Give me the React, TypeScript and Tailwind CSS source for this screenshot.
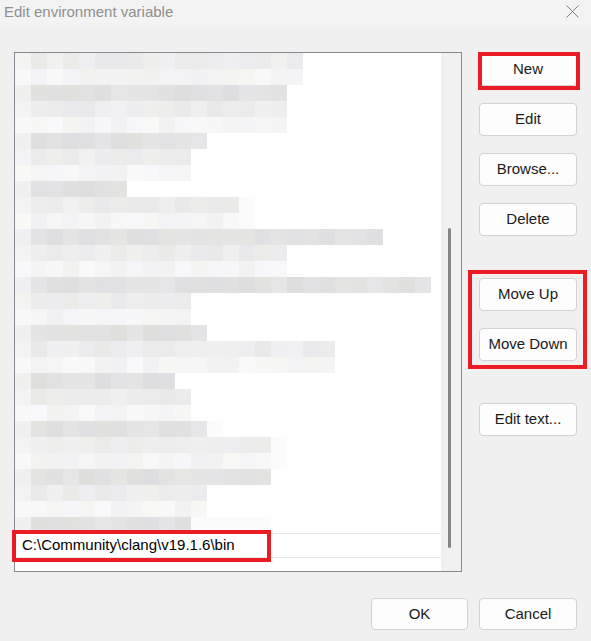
import React from "react"

// blurred list entries: [blocks, tone, faint tail blocks]
const rows: [number, "d" | "m" | "l", number][] = [
  [18, "m", 0], [18, "l", 0], [17, "d", 0], [17, "m", 0], [17, "l", 0],
  [12, "d", 0], [11, "m", 0], [11, "l", 0], [7, "d", 0], [14, "m", 1],
  [14, "l", 1], [23, "d", 0], [17, "m", 0], [17, "l", 0], [26, "d", 0],
  [11, "m", 0], [11, "l", 0], [12, "d", 0], [20, "m", 0], [20, "l", 0],
  [10, "d", 0], [11, "m", 0], [11, "l", 0], [12, "d", 1], [16, "m", 1],
  [16, "l", 1], [16, "d", 0], [12, "m", 0], [12, "l", 0], [11, "d", 5],
]

const base = { d: 226, m: 237, l: 245 }
const first = { d: 240, m: 243, l: 248 }

const shade = (r: number, c: number, tone: "d" | "m" | "l") => {
  const h = Math.abs(Math.sin(r * 12.9898 + c * 78.233) * 43758.5453) % 1
  const v = c === 0 ? first[tone] : base[tone] + Math.round((h - 0.5) * 8)
  const t = Math.abs(Math.sin(r * 3.1 + c * 7.7) * 1000) % 1
  const b = t > 0.7 ? 2 : t < 0.2 ? -1 : 0
  return `rgb(${v},${v},${Math.min(255, v + b)})`
}

const Button = ({ label }: { label: string }) => (
  <div className="h-[33px] w-[98px] flex items-center justify-center rounded-[4px] border border-[#d2d2d2] bg-[#fdfdfd] text-[15px] text-[#1a1a1a]">
    {label}
  </div>
)

const App = () => {
  return (
    <div className="w-[591px] h-[641px] bg-[#f0f0f0] flex flex-col font-['Liberation_Sans',Arial,sans-serif] overflow-hidden">
      <div className="h-[27px] bg-[#f3f3f3] flex items-center justify-between pl-[4px] pr-[12px]">
        <span className="text-[15px] text-[#8f8f8f] leading-none -mt-[4px]">Edit environment variable</span>
        <svg width="13" height="13" viewBox="0 0 13 13" className="-mt-[4px]">
          <path d="M0.5 0.5 L12.5 12.5 M12.5 0.5 L0.5 12.5" stroke="#808080" strokeWidth="1" />
        </svg>
      </div>

      <div className="flex pl-[14px] pt-[25px]">
        <div className="w-[448px] h-[520px] border border-[#868b93] bg-white flex">
          <div className="flex-1 flex flex-col">
            {rows.map(([n, tone, faint], r) => (
              <div key={r} className="flex h-[16px]">
                {Array.from({ length: n }).map((_, c) => (
                  <div key={c} className="w-[16px] h-[16px]" style={{ backgroundColor: shade(r, c, tone) }} />
                ))}
                {Array.from({ length: faint }).map((_, c) => (
                  <div key={"f" + c} className="w-[16px] h-[16px] bg-[#fbfbfb]" />
                ))}
              </div>
            ))}
            <div className="h-px bg-[#e8e8e8]" />
            <div className="relative h-[23px] flex items-center pl-[7px] text-[15px] text-black">
              <span>C:\Community\clang\v19.1.6\bin</span>
              <div className="absolute -left-[3px] -top-[4px] w-[259px] h-[32px] border-4 border-[#ec1c24]" />
            </div>
            <div className="h-px bg-[#e8e8e8]" />
          </div>
          <div className="w-[20px] bg-[#f1f1f1] pl-[7px] pt-[175px]">
            <div className="w-[3px] h-[320px] bg-[#858585] rounded-full" />
          </div>
        </div>

        <div className="ml-[17px] pt-[1px] flex flex-col">
          <div className="relative">
            <Button label="New" />
            <div className="absolute -left-[1px] -top-[1px] w-[102px] h-[38px] border-4 border-[#ec1c24]" />
          </div>
          <div className="mt-[17px]"><Button label="Edit" /></div>
          <div className="mt-[17px]"><Button label="Browse..." /></div>
          <div className="mt-[17px]"><Button label="Delete" /></div>
          <div className="relative mt-[42px] flex flex-col gap-[17px]">
            <Button label="Move Up" />
            <Button label="Move Down" />
            <div className="absolute -left-[11px] -top-[8px] w-[119px] h-[99px] border-4 border-[#ec1c24]" />
          </div>
          <div className="mt-[42px]"><Button label="Edit text..." /></div>
        </div>
      </div>

      <div className="flex justify-end gap-[11px] pr-[14px] mt-[26px]">
        <div className="h-[32px] w-[97px] flex items-center justify-center rounded-[4px] border border-[#d2d2d2] bg-[#fdfdfd] text-[15px] text-[#1a1a1a]">OK</div>
        <div className="h-[32px] w-[98px] flex items-center justify-center rounded-[4px] border border-[#d2d2d2] bg-[#fdfdfd] text-[15px] text-[#1a1a1a]">Cancel</div>
      </div>
    </div>
  )
}

export default App
